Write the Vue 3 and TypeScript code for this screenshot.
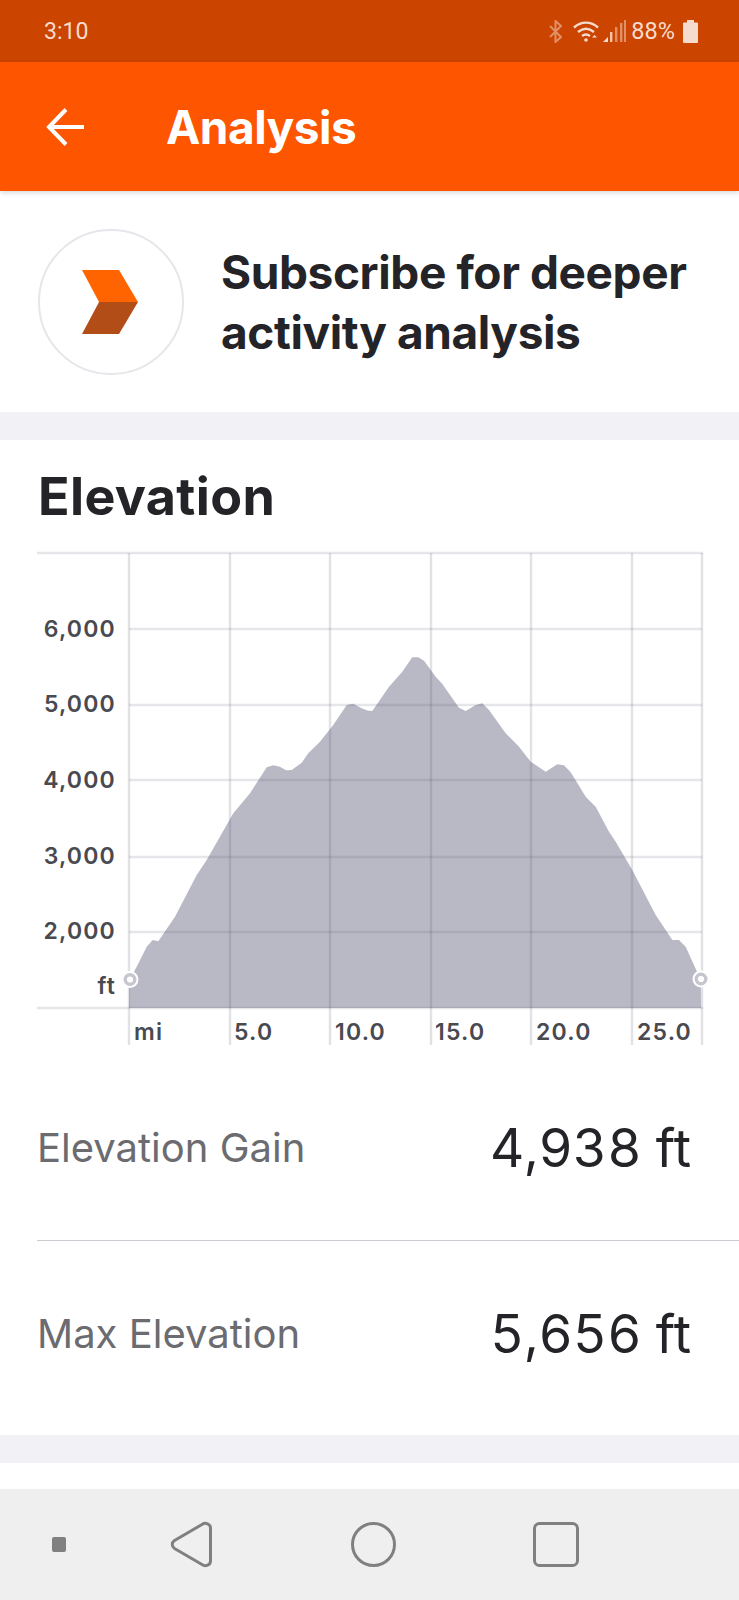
<script setup lang="ts">
type P = [number, number]
const left: P[] = [[388,1320],[410,1280],[440,1220],[458,1200],[475,1204],[525,1130],[590,1005],[620,960],[700,820],[750,760],[800,682],[820,676],[840,680],[858,691],[875,690],[905,668],[925,640],[960,605],[1000,555],[1040,495],[1060,491],[1085,505],[1105,512]]
const right: P[] = [[10,513],[60,440],[100,395],[130,352],[148,352],[165,362],[200,410],[220,432],[270,503],[290,513],[320,495],[340,490],[360,510],[410,580],[450,620],[485,665],[530,695],[565,673],[585,676],[605,697],[650,770],[680,800],[720,875],[740,905],[790,990],[860,1125],[910,1200],[930,1200],[950,1220],[995,1320]]
const pts: P[] = [
  ...left.map(([x, y]): P => [x / 3, 540 + y / 3]),
  ...right.map(([x, y]): P => [369 + x / 3, 540 + y / 3]),
]
const areaPath = `M129 1008 L${pts.map(p => `${p[0].toFixed(1)} ${p[1].toFixed(1)}`).join(' L')} L701 1008 Z`
const vLines = [129, 230, 330, 431, 531, 632, 702]
const hLines = [629, 705, 780, 857, 932]
const yLabels = [
  { t: '6,000', y: 637 },
  { t: '5,000', y: 712 },
  { t: '4,000', y: 788 },
  { t: '3,000', y: 864 },
  { t: '2,000', y: 939 },
]
const xLabels = [
  { t: 'mi', x: 134 },
  { t: '5.0', x: 234 },
  { t: '10.0', x: 335 },
  { t: '15.0', x: 435 },
  { t: '20.0', x: 536 },
  { t: '25.0', x: 637 },
]
const rows = [
  { label: 'Elevation Gain', value: '4,938 ft' },
  { label: 'Max Elevation', value: '5,656 ft' },
]
</script>

<template>
  <div class="page">
    <div class="status">
      <span class="clock">3:10</span>
      <div class="status-icons">
        <svg class="ic-bt" width="13" height="23" viewBox="0 0 13 23" fill="none" stroke="#e28f66" stroke-width="2">
          <path d="M1 6l11 11-5.500 5V1l5.500 5L1 17" />
        </svg>
        <svg class="ic-wifi" width="26" height="22" viewBox="0 0 26 22" fill="none" stroke="#f6dccf" stroke-width="2.400">
          <path d="M1 7.500C8 1 18 1 25 7.500" />
          <path d="M5 12c5-4 11-4 16 0" />
          <path d="M9 16c2.500-1.800 5.500-1.800 8 0" />
          <circle cx="13" cy="20" r="1.800" fill="#f6dccf" stroke="none" />
          <path d="M19 17.500l2.500-2.500 2.500 2.500z" fill="#f6dccf" stroke="none" />
        </svg>
        <svg class="ic-signal" width="23" height="22" viewBox="0 0 23 22">
          <path d="M0 22l5-5v5z" fill="#f6dccf" />
          <rect x="7" y="12" width="2.400" height="10" fill="#f0c4ad" />
          <rect x="12" y="7" width="2.400" height="15" fill="#e28f66" />
          <rect x="17" y="3" width="2.400" height="19" fill="#e28f66" />
          <rect x="21" y="0" width="2" height="22" fill="#e28f66" />
        </svg>
        <span class="pct">88%</span>
        <svg class="ic-batt" width="15" height="23" viewBox="0 0 15 23">
          <path d="M4 0h7v2.500h3a1 1 0 0 1 1 1V22a1 1 0 0 1-1 1H1a1 1 0 0 1-1-1V3.500a1 1 0 0 1 1-1h3z" fill="#f6dccf" />
        </svg>
      </div>
    </div>

    <header class="appbar">
      <svg class="back" width="38" height="38" viewBox="0 0 38 38" fill="none" stroke="#fff" stroke-width="4">
        <path d="M38 19H3M20 1.500 3 19l17 17.500" />
      </svg>
      <h1 class="appbar-title">Analysis</h1>
    </header>

    <section class="promo">
      <div class="logo-ring">
        <svg class="logo-mark" width="56" height="64" viewBox="0 0 56 64">
          <path d="M0 0h37l19 32H17z" fill="#ff6400" />
          <path d="M17 32h39L37 64H0z" fill="#b34d18" />
        </svg>
      </div>
      <p class="promo-text">Subscribe for deeper<br />activity analysis</p>
    </section>

    <div class="gap"></div>

    <section class="elev">
      <h2 class="elev-title">Elevation</h2>
      <svg class="chart" width="739" height="510" viewBox="0 540 739 510">
        <path :d="areaPath" fill="#b9b9c6" />
        <g stroke="#3c3c5a" stroke-opacity="0.13" stroke-width="2.400">
          <line x1="37" y1="553" x2="703" y2="553" />
          <line v-for="y in hLines" :key="y" x1="129" :y1="y" x2="702" :y2="y" />
          <line x1="37" y1="1008" x2="703" y2="1008" />
        </g>
        <g stroke="#3c3c5a" stroke-opacity="0.15" stroke-width="2.400">
          <line v-for="x in vLines" :key="x" :x1="x" y1="553" :x2="x" y2="1045" />
        </g>
        <g class="axis">
          <text v-for="l in yLabels" :key="l.t" x="116" :y="l.y" text-anchor="end">{{ l.t }}</text>
          <text x="116" y="994" text-anchor="end">ft</text>
          <text v-for="l in xLabels" :key="l.t" :x="l.x" y="1040">{{ l.t }}</text>
        </g>
        <g fill="#fff">
          <circle cx="130" cy="979.500" r="8.500" />
          <circle cx="701" cy="979" r="8.500" />
        </g>
        <g fill="#fff" stroke="#c6c5d0" stroke-width="3.400">
          <circle cx="130" cy="979.500" r="4.800" />
          <circle cx="701" cy="979" r="4.800" />
        </g>
      </svg>
      <div v-for="(r, i) in rows" :key="r.label" class="row" :class="i === 0 ? 'row-first' : 'row-second'">
        <span class="row-label">{{ r.label }}</span>
        <span class="row-value">{{ r.value }}</span>
      </div>
    </section>

    <div class="gap"></div>
    <div class="peek"></div>

    <nav class="navbar">
      <svg width="739" height="111" viewBox="0 1489 739 111" fill="none" stroke="#808080" stroke-width="3">
        <rect x="52" y="1537" width="14" height="15" rx="2" fill="#808080" stroke="none" />
        <path d="M202 1524.500C205.500 1522 210.500 1524 210.500 1528V1561C210.500 1565 205.500 1567 202 1564.500L174.500 1548.500C171.500 1546.500 171.500 1542.500 174.500 1540.500Z" stroke-linejoin="round" />
        <ellipse cx="373.500" cy="1544.500" rx="21" ry="21" />
        <rect x="534.500" y="1523.500" width="43" height="42" rx="5" />
      </svg>
    </nav>
  </div>
</template>

<style>
html, body { margin: 0; background: #fff; }
</style>

<style scoped>
.page {
  width: 739px;
  height: 1600px;
  overflow: hidden;
  display: flex;
  flex-direction: column;
  font-family: Inter, "Liberation Sans", sans-serif;
  background: #fff;
}
.status {
  height: 62px;
  background: #cb4400;
  display: flex;
  align-items: center;
  justify-content: space-between;
  padding: 0 41px 0 44px;
  color: #f6dccf;
  font-family: Roboto, sans-serif;
  flex: none;
}
.clock { font-size: 23px; }
.status-icons { display: flex; align-items: center; }
.ic-bt { margin-right: 11px; }
.ic-signal { margin: 0 5px 0 4px; }
.pct { font-size: 23.500px; margin-right: 8px; }
.appbar {
  height: 129px;
  background: #fe5500;
  display: flex;
  align-items: center;
  flex: none;
  box-shadow: 0 2px 5px rgba(0, 0, 0, .15);
  position: relative;
}
.back { margin-left: 46px; flex: none; }
.appbar-title {
  margin: 0 0 0 82px;
  padding-top: 1px;
  color: #fff;
  font-size: 46px;
  font-weight: 700;
  line-height: 56px;
  letter-spacing: -.5px;
}
.promo {
  height: 221px;
  display: flex;
  align-items: center;
  padding-left: 38px;
  flex: none;
}
.logo-ring {
  width: 146px;
  height: 146px;
  box-sizing: border-box;
  border: 2px solid #e6e6eb;
  border-radius: 50%;
  display: flex;
  align-items: center;
  justify-content: center;
  flex: none;
}
.logo-mark { margin-right: 2px; }
.promo-text {
  margin: 0 0 0 37px;
  padding-top: 0;
  font-size: 46px;
  line-height: 60px;
  font-weight: 700;
  color: #242428;
  letter-spacing: -.4px;
}
.gap { height: 28px; background: #f1f1f6; flex: none; }
.elev { height: 995px; flex: none; }
.elev-title {
  margin: 0;
  padding: 27px 0 13px 38px;
  font-size: 52px;
  line-height: 60px;
  font-weight: 700;
  color: #242428;
  letter-spacing: .35px;
}
.chart { display: block; }
.axis text {
  font-size: 23px;
  font-weight: 600;
  letter-spacing: 1.200px;
  fill: #494950;
}
.row {
  box-sizing: border-box;
  display: flex;
  justify-content: space-between;
  align-items: flex-start;
  margin-left: 37px;
  padding-right: 48px;
}
.row-first { height: 191px; padding-top: 68px; border-bottom: 1px solid #cbcbd4; }
.row-second { height: 194px; padding-top: 63px; }
.row-label {
  font-size: 40px;
  line-height: 48px;
  margin-top: 6px;
  color: #6b6b70;
  font-weight: 400;
}
.row-value {
  font-size: 53px;
  line-height: 60px;
  color: #242428;
  font-weight: 400;
  letter-spacing: 0;
  font-variant-numeric: tabular-nums;
}
.peek { height: 26px; flex: none; }
.navbar { height: 111px; background: #efefef; flex: none; }
.navbar svg { display: block; }
</style>
